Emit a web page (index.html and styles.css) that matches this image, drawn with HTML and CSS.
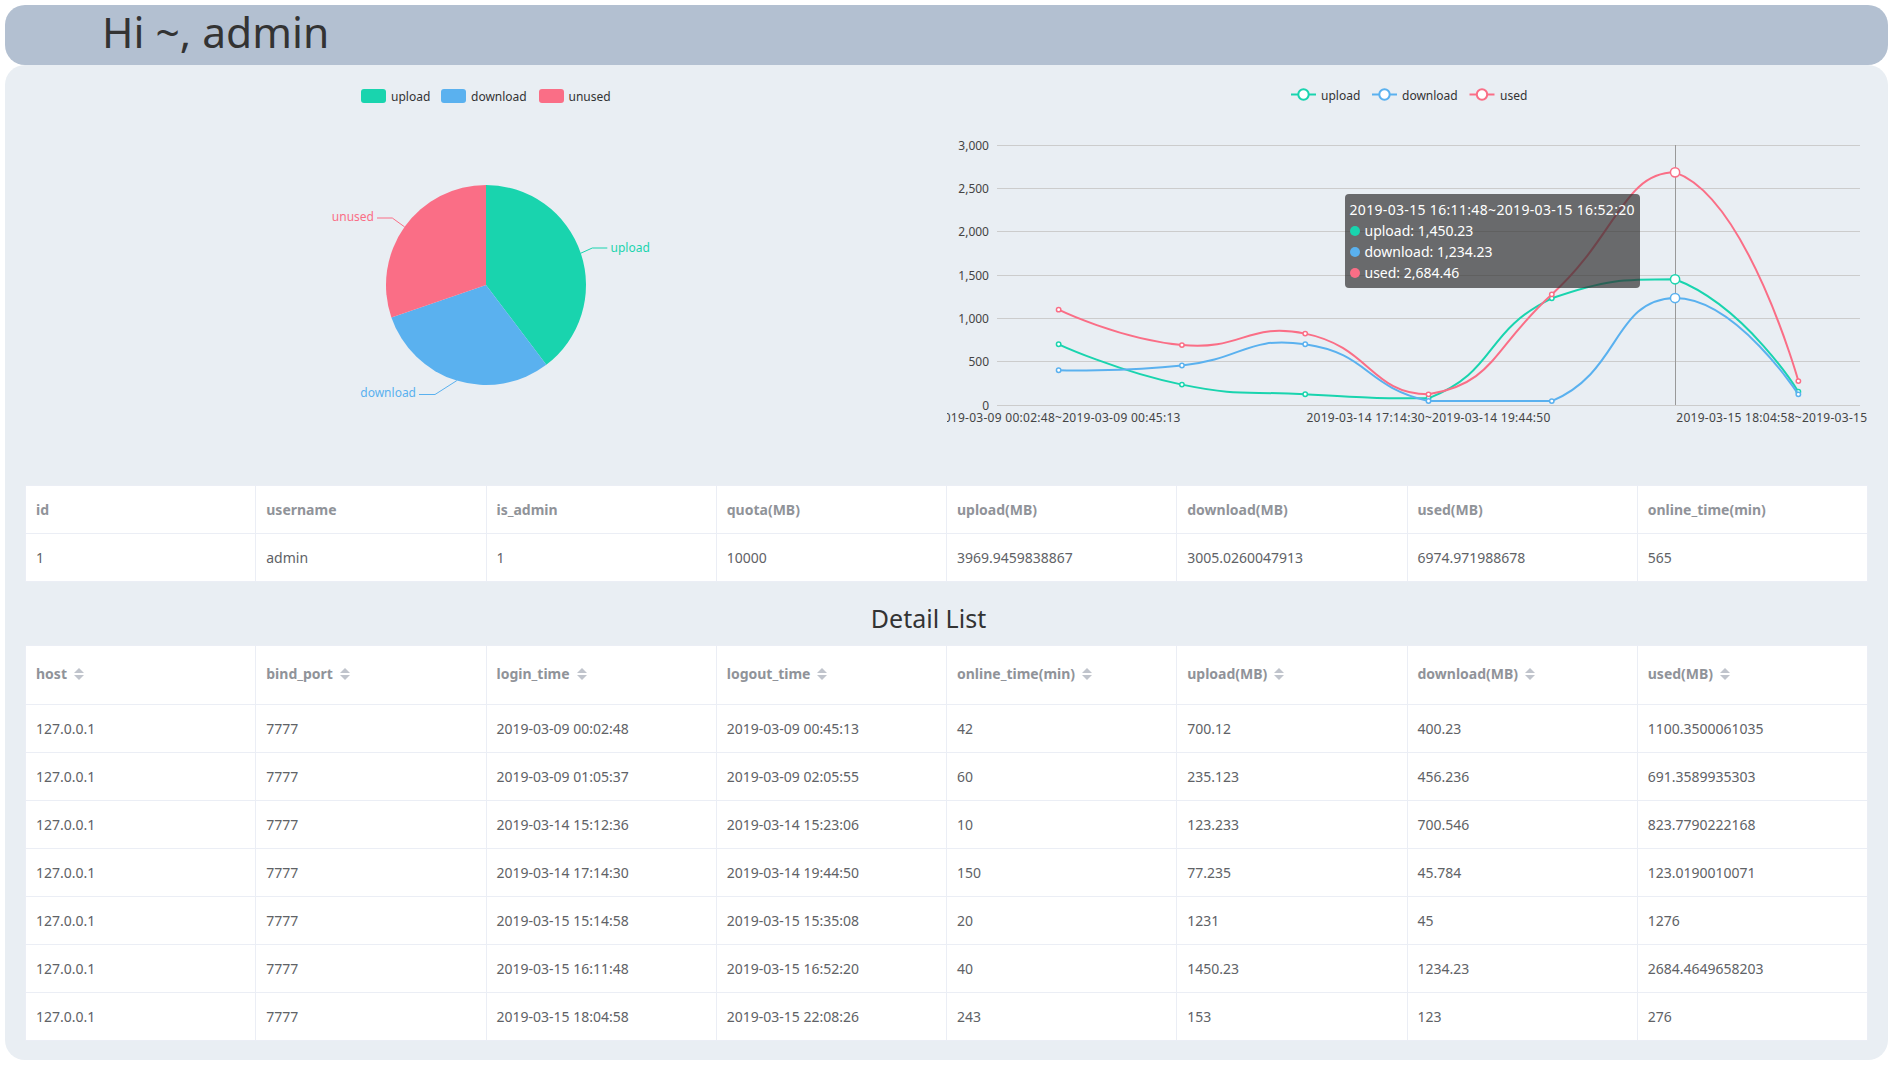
FILE: index.html
```html
<!DOCTYPE html>
<html lang="en">
<head>
<meta charset="utf-8">
<title>Dashboard</title>
<link rel="stylesheet" href="styles.css">
</head>
<body>
<div class="app">
  <h1 class="top">Hi ~, admin</h1>
  <main class="main">
    <section class="charts">
      <div class="chart">
        <svg class="piesvg" width="921" height="400">
          <g>
            <rect x="336" y="4" width="25" height="14" rx="3" class="f-up"/>
            <text x="366" y="11" class="lgt">upload</text>
            <rect x="416" y="4" width="25" height="14" rx="3" class="f-down"/>
            <text x="446" y="11" class="lgt">download</text>
            <rect x="514" y="4" width="25" height="14" rx="3" class="f-un"/>
            <text x="543.5" y="11" class="lgt">unused</text>
          </g>
          <path class="f-up" d="M461,200 L461,100 A100,100 0 0 1 521.30,279.77 Z"/>
          <path class="f-down" d="M461,200 L521.30,279.77 A100,100 0 0 1 366.39,232.39 Z"/>
          <path class="f-un" d="M461,200 L366.39,232.39 A100,100 0 0 1 461,100 Z"/>
          <polyline class="ll s-up" points="555.8,168.2 567.3,163 582.3,163"/>
          <text x="585.5" y="162" class="pl f-up">upload</text>
          <polyline class="ll s-un" points="379.6,141.9 367.3,133 352,133"/>
          <text x="349" y="131" text-anchor="end" class="pl f-un">unused</text>
          <polyline class="ll s-down" points="431.8,295.6 410,309.5 394,309.5"/>
          <text x="391" y="307.5" text-anchor="end" class="pl f-down">download</text>
        </svg>
      </div>
      <div class="chart">
        <svg class="linesvg" width="921" height="400">
          <g>
            <line x1="344" y1="9.5" x2="369" y2="9.5" class="lgl s-up"/>
            <circle cx="356.5" cy="9.5" r="5.2" class="lgc s-up"/>
            <text x="374" y="10" class="lgt">upload</text>
            <line x1="425" y1="9.5" x2="450" y2="9.5" class="lgl s-down"/>
            <circle cx="437.5" cy="9.5" r="5.2" class="lgc s-down"/>
            <text x="455" y="10" class="lgt">download</text>
            <line x1="522.5" y1="9.5" x2="547.5" y2="9.5" class="lgl s-un"/>
            <circle cx="535" cy="9.5" r="5.2" class="lgc s-un"/>
            <text x="553" y="10" class="lgt">used</text>
          </g>
          <g class="grid">
            <line x1="50" x2="913" y1="60.5" y2="60.5"/>
            <line x1="50" x2="913" y1="103.5" y2="103.5"/>
            <line x1="50" x2="913" y1="146.5" y2="146.5"/>
            <line x1="50" x2="913" y1="190.5" y2="190.5"/>
            <line x1="50" x2="913" y1="233.5" y2="233.5"/>
            <line x1="50" x2="913" y1="276.5" y2="276.5"/>
            <line x1="50" x2="913" y1="320.5" y2="320.5"/>
          </g>
          <g class="ylab">
            <text x="42" y="60.5">3,000</text>
            <text x="42" y="103.5">2,500</text>
            <text x="42" y="146.5">2,000</text>
            <text x="42" y="190.5">1,500</text>
            <text x="42" y="233.5">1,000</text>
            <text x="42" y="276.5">500</text>
            <text x="42" y="320.5">0</text>
          </g>
          <g class="xlab">
            <text x="111.6" y="332">2019-03-09 00:02:48~2019-03-09 00:45:13</text>
            <text x="481.5" y="332">2019-03-14 17:14:30~2019-03-14 19:44:50</text>
            <text x="851.4" y="332">2019-03-15 18:04:58~2019-03-15 22:08:26</text>
          </g>
          <line class="ptr" x1="728.5" x2="728.5" y1="60" y2="320"/>
          <g id="series"></g>
        </svg>
        <div class="tip">
          <div class="tt">2019-03-15 16:11:48~2019-03-15 16:52:20</div>
          <div><span class="dot b-up"></span>upload: 1,450.23</div>
          <div><span class="dot b-down"></span>download: 1,234.23</div>
          <div><span class="dot b-un"></span>used: 2,684.46</div>
        </div>
      </div>
    </section>

    <table class="tbl">
      <thead>
        <tr><th><div class="cell">id</div></th><th><div class="cell">username</div></th><th><div class="cell">is_admin</div></th><th><div class="cell">quota(MB)</div></th><th><div class="cell">upload(MB)</div></th><th><div class="cell">download(MB)</div></th><th><div class="cell">used(MB)</div></th><th><div class="cell">online_time(min)</div></th></tr>
      </thead>
      <tbody>
        <tr><td><div class="cell">1</div></td><td><div class="cell">admin</div></td><td><div class="cell">1</div></td><td><div class="cell">10000</div></td><td><div class="cell">3969.9459838867</div></td><td><div class="cell">3005.0260047913</div></td><td><div class="cell">6974.971988678</div></td><td><div class="cell">565</div></td></tr>
      </tbody>
    </table>

    <h3 class="title">Detail List</h3>

    <table class="tbl">
      <thead>
        <tr>
          <th><div class="cell">host<svg class="caret" width="24" height="34" viewBox="0 0 24 34"><path d="M12 10L17 15H7Z"/><path d="M7 17H17L12 22Z"/></svg></div></th>
          <th><div class="cell">bind_port<svg class="caret" width="24" height="34" viewBox="0 0 24 34"><path d="M12 10L17 15H7Z"/><path d="M7 17H17L12 22Z"/></svg></div></th>
          <th><div class="cell">login_time<svg class="caret" width="24" height="34" viewBox="0 0 24 34"><path d="M12 10L17 15H7Z"/><path d="M7 17H17L12 22Z"/></svg></div></th>
          <th><div class="cell">logout_time<svg class="caret" width="24" height="34" viewBox="0 0 24 34"><path d="M12 10L17 15H7Z"/><path d="M7 17H17L12 22Z"/></svg></div></th>
          <th><div class="cell">online_time(min)<svg class="caret" width="24" height="34" viewBox="0 0 24 34"><path d="M12 10L17 15H7Z"/><path d="M7 17H17L12 22Z"/></svg></div></th>
          <th><div class="cell">upload(MB)<svg class="caret" width="24" height="34" viewBox="0 0 24 34"><path d="M12 10L17 15H7Z"/><path d="M7 17H17L12 22Z"/></svg></div></th>
          <th><div class="cell">download(MB)<svg class="caret" width="24" height="34" viewBox="0 0 24 34"><path d="M12 10L17 15H7Z"/><path d="M7 17H17L12 22Z"/></svg></div></th>
          <th><div class="cell">used(MB)<svg class="caret" width="24" height="34" viewBox="0 0 24 34"><path d="M12 10L17 15H7Z"/><path d="M7 17H17L12 22Z"/></svg></div></th>
        </tr>
      </thead>
      <tbody>
        <tr><td><div class="cell">127.0.0.1</div></td><td><div class="cell">7777</div></td><td><div class="cell">2019-03-09 00:02:48</div></td><td><div class="cell">2019-03-09 00:45:13</div></td><td><div class="cell">42</div></td><td><div class="cell">700.12</div></td><td><div class="cell">400.23</div></td><td><div class="cell">1100.3500061035</div></td></tr>
        <tr><td><div class="cell">127.0.0.1</div></td><td><div class="cell">7777</div></td><td><div class="cell">2019-03-09 01:05:37</div></td><td><div class="cell">2019-03-09 02:05:55</div></td><td><div class="cell">60</div></td><td><div class="cell">235.123</div></td><td><div class="cell">456.236</div></td><td><div class="cell">691.3589935303</div></td></tr>
        <tr><td><div class="cell">127.0.0.1</div></td><td><div class="cell">7777</div></td><td><div class="cell">2019-03-14 15:12:36</div></td><td><div class="cell">2019-03-14 15:23:06</div></td><td><div class="cell">10</div></td><td><div class="cell">123.233</div></td><td><div class="cell">700.546</div></td><td><div class="cell">823.7790222168</div></td></tr>
        <tr><td><div class="cell">127.0.0.1</div></td><td><div class="cell">7777</div></td><td><div class="cell">2019-03-14 17:14:30</div></td><td><div class="cell">2019-03-14 19:44:50</div></td><td><div class="cell">150</div></td><td><div class="cell">77.235</div></td><td><div class="cell">45.784</div></td><td><div class="cell">123.0190010071</div></td></tr>
        <tr><td><div class="cell">127.0.0.1</div></td><td><div class="cell">7777</div></td><td><div class="cell">2019-03-15 15:14:58</div></td><td><div class="cell">2019-03-15 15:35:08</div></td><td><div class="cell">20</div></td><td><div class="cell">1231</div></td><td><div class="cell">45</div></td><td><div class="cell">1276</div></td></tr>
        <tr><td><div class="cell">127.0.0.1</div></td><td><div class="cell">7777</div></td><td><div class="cell">2019-03-15 16:11:48</div></td><td><div class="cell">2019-03-15 16:52:20</div></td><td><div class="cell">40</div></td><td><div class="cell">1450.23</div></td><td><div class="cell">1234.23</div></td><td><div class="cell">2684.4649658203</div></td></tr>
        <tr><td><div class="cell">127.0.0.1</div></td><td><div class="cell">7777</div></td><td><div class="cell">2019-03-15 18:04:58</div></td><td><div class="cell">2019-03-15 22:08:26</div></td><td><div class="cell">243</div></td><td><div class="cell">153</div></td><td><div class="cell">123</div></td><td><div class="cell">276</div></td></tr>
      </tbody>
    </table>
  </main>
</div>
<script src="script.js"></script>
</body>
</html>
```

FILE: styles.css
```css
* { box-sizing: border-box; }
html, body { margin: 0; background: #fff; }
body { font-family: "Noto Sans", "Liberation Sans", sans-serif; color: #333; }

.app { padding: 5px 10px 7px 5px; }

.top {
  margin: 0;
  height: 60px;
  background: #b3c0d1;
  border-radius: 20px;
  padding-left: 97px;
  font-size: 42.5px;
  line-height: 53px;
  font-weight: normal;
  color: #333;
}

.main {
  background: #e9eef3;
  border-radius: 20px;
  padding: 20px 20px 19px 20px;
}

.charts { display: flex; height: 400px; }
.chart { flex: 1 1 0; min-width: 0; position: relative; }
.chart svg { display: block; overflow: hidden; }

.lgt { font-size: 12px; fill: #333; dominant-baseline: central; }
.pl { font-size: 12px; dominant-baseline: central; }
.ll { fill: none; stroke-width: 1; }
.lgl { stroke-width: 2; }
.lgc { stroke-width: 2; fill: #fff; }

.f-up { fill: #19d4ae; }
.f-down { fill: #5ab1ef; }
.f-un { fill: #fa6e86; }
.s-up { stroke: #19d4ae; }
.s-down { stroke: #5ab1ef; }
.s-un { stroke: #fa6e86; }

.grid line { stroke: #ccc; stroke-width: 1; }
.ylab text { font-size: 12px; fill: #444; text-anchor: end; dominant-baseline: central; }
.xlab text { font-size: 12px; fill: #444; text-anchor: middle; dominant-baseline: central; letter-spacing: 0.27px; }
.ptr { stroke: #999; stroke-width: 1; }
.ln { fill: none; stroke-width: 2; stroke-linejoin: round; }
.sym { fill: #fff; stroke-width: 1.5; }

.tip {
  position: absolute;
  left: 398px;
  top: 109px;
  padding: 5px;
  background: rgba(50, 50, 50, 0.7);
  border-radius: 4px;
  color: #fff;
  font-size: 14px;
  line-height: 21px;
  white-space: nowrap;
}
.tip .tt { letter-spacing: 0.33px; }
.dot { display: inline-block; width: 10px; height: 10px; border-radius: 5px; margin-right: 5px; }
.b-up { background: #19d4ae; }
.b-down { background: #5ab1ef; }
.b-un { background: #fa6e86; }

.tbl {
  width: 100%;
  table-layout: fixed;
  border-collapse: separate;
  border-spacing: 0;
  background: #fff;
  border-top: 1px solid #ebeef5;
  border-left: 1px solid #ebeef5;
  font-size: 14px;
  color: #606266;
}
.tbl th, .tbl td {
  padding: 12px 0;
  text-align: left;
  border-right: 1px solid #ebeef5;
  border-bottom: 1px solid #ebeef5;
  vertical-align: middle;
}
.tbl th { color: #909399; font-weight: bold; }
.cell { padding: 0 10px; line-height: 23px; white-space: nowrap; overflow: hidden; }
.caret { vertical-align: middle; fill: #c0c4cc; }

.title {
  margin: 0;
  padding: 19px 36px 10px 0;
  font-size: 25px;
  line-height: 34px;
  font-weight: normal;
  color: #333;
  text-align: center;
}
```

FILE: script.js
```js
(function () {
  var upload = [700.12, 235.123, 123.233, 77.235, 1231, 1450.23, 153];
  var download = [400.23, 456.236, 700.546, 45.784, 45, 1234.23, 123];
  var used = upload.map(function (v, i) { return v + download[i]; });
  var X0 = 50, BAND = 863 / 7, Y0 = 320, H = 260, MAX = 3000, ACTIVE = 5;
  var NS = 'http://www.w3.org/2000/svg';

  function pts(d) {
    return d.map(function (v, i) { return [X0 + (i + 0.5) * BAND, Y0 - v / MAX * H]; });
  }
  function f(q) { return q[0].toFixed(2) + ',' + q[1].toFixed(2); }
  function smoothPath(p, s) {
    var mnx = Infinity, mny = Infinity, mxx = -Infinity, mxy = -Infinity;
    p.forEach(function (q) {
      mnx = Math.min(mnx, q[0]); mny = Math.min(mny, q[1]);
      mxx = Math.max(mxx, q[0]); mxy = Math.max(mxy, q[1]);
    });
    function cl(c) {
      return [Math.min(Math.max(c[0], mnx), mxx), Math.min(Math.max(c[1], mny), mxy)];
    }
    var d = 'M' + f(p[0]);
    var cp0 = p[0].slice();
    for (var i = 1; i < p.length; i++) {
      var cur = p[i], prev = p[i - 1], next = p[i + 1], cp1, ratio = 0.5, v = [0, 0];
      if (!next) {
        cp1 = cur.slice();
      } else {
        v = [next[0] - prev[0], next[1] - prev[1]];
        var lp = Math.hypot(cur[0] - prev[0], cur[1] - prev[1]);
        var ln = Math.hypot(cur[0] - next[0], cur[1] - next[1]);
        ratio = ln / (ln + lp);
        cp1 = [cur[0] - v[0] * s * (1 - ratio), cur[1] - v[1] * s * (1 - ratio)];
      }
      d += ' C' + f(cl(cp0)) + ' ' + f(cl(cp1)) + ' ' + f(cur);
      cp0 = [cur[0] + v[0] * s * ratio, cur[1] + v[1] * s * ratio];
    }
    return d;
  }

  var series = [[upload, 's-up'], [download, 's-down'], [used, 's-un']];
  var g = document.getElementById('series');
  series.forEach(function (s) {
    var p = pts(s[0]);
    var path = document.createElementNS(NS, 'path');
    path.setAttribute('d', smoothPath(p, 0.5));
    path.setAttribute('class', 'ln ' + s[1]);
    g.appendChild(path);
    p.forEach(function (q, i) {
      var c = document.createElementNS(NS, 'circle');
      c.setAttribute('cx', q[0].toFixed(2));
      c.setAttribute('cy', q[1].toFixed(2));
      c.setAttribute('r', i === ACTIVE ? 4.6 : 2.2);
      c.setAttribute('class', 'sym ' + s[1]);
      g.appendChild(c);
    });
  });
})();
```
